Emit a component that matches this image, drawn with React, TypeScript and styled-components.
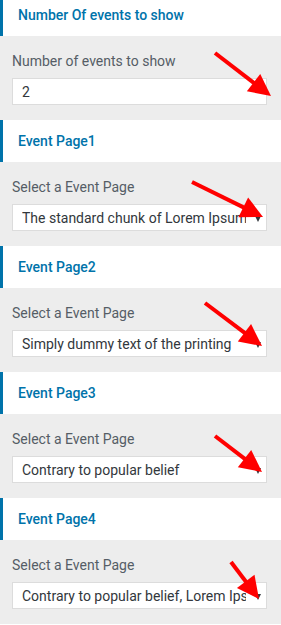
import React from 'react';
import styled, { createGlobalStyle } from 'styled-components';

const GlobalStyle = createGlobalStyle`
  html, body {
    margin: 0;
    padding: 0;
    background: #ffffff;
    overflow: hidden;
  }
  body {
    font-family: Roboto, "Liberation Sans", Arial, sans-serif;
  }
`;

const Page = styled.div`
  position: relative;
  width: 281px;
  /* the screenshot is scrolled a few pixels down */
  margin-top: -6px;
`;

const Header = styled.div`
  height: 42px;
  display: flex;
  align-items: center;
  box-sizing: border-box;
  padding-left: 15px;
  background: #fff;
  border-left: 3px solid #0073aa;
  color: #0073aa;
  font-size: 14px;
  font-weight: 500;
`;

const Panel = styled.div`
  background: #ededed;
  box-sizing: border-box;
  height: 84px;
  padding: 17px 14px 15px 12px;
  display: flex;
  flex-direction: column;
  gap: 9px;
`;

const Label = styled.div`
  font-size: 14px;
  line-height: 16px;
  color: #555d66;
`;

const Field = styled.div<{ $select?: boolean }>`
  position: relative;
  height: 27px;
  box-sizing: border-box;
  background: #fff;
  border: 1px solid #dcdcdc;
  display: flex;
  align-items: center;
  padding: 0 ${(p) => (p.$select ? '20px' : '8px')} 0 9px;
  font-size: 14px;
  color: #32373c;
`;

const FieldText = styled.span`
  white-space: nowrap;
  overflow: hidden;
  flex: 1;
`;

const Caret = styled.span`
  position: absolute;
  right: 5px;
  top: 11px;
  width: 0;
  height: 0;
  border-left: 3.5px solid transparent;
  border-right: 3.5px solid transparent;
  border-top: 6px solid #32373c;
`;

const Overlay = styled.svg`
  position: absolute;
  left: 0;
  top: 6px;
  pointer-events: none;
`;

type ArrowProps = { x1: number; y1: number; x2: number; y2: number };

const Arrow: React.FC<ArrowProps> = ({ x1, y1, x2, y2 }) => {
  const dx = x2 - x1;
  const dy = y2 - y1;
  const len = Math.sqrt(dx * dx + dy * dy);
  const ux = dx / len;
  const uy = dy / len;
  const headLen = 22;
  const half = 11;
  const bx = x2 - ux * headLen;
  const by = y2 - uy * headLen;
  const pts = `${x2},${y2} ${bx - uy * half},${by + ux * half} ${bx + uy * half},${by - ux * half}`;
  return (
    <g>
      <line x1={x1} y1={y1} x2={bx + ux * 2} y2={by + uy * 2} stroke="#ff0000" strokeWidth={4} />
      <polygon points={pts} fill="#ff0000" />
    </g>
  );
};

const sections = [
  { title: 'Event Page1', value: 'The standard chunk of Lorem Ipsum' },
  { title: 'Event Page2', value: 'Simply dummy text of the printing' },
  { title: 'Event Page3', value: 'Contrary to popular belief' },
  { title: 'Event Page4', value: 'Contrary to popular belief, Lorem Ipsum' },
];

const arrows: ArrowProps[] = [
  { x1: 215, y1: 53, x2: 271, y2: 96 },
  { x1: 192, y1: 182, x2: 263, y2: 217 },
  { x1: 205, y1: 303, x2: 262, y2: 346 },
  { x1: 215, y1: 436, x2: 262, y2: 472 },
  { x1: 231, y1: 562, x2: 259, y2: 599 },
];

const App: React.FC = () => {
  return (
    <>
      <GlobalStyle />
      <Page>
        <Header>Number Of events to show</Header>
        <Panel>
          <Label>Number of events to show</Label>
          <Field>
            <FieldText>2</FieldText>
          </Field>
        </Panel>
        {sections.map((s) => (
          <React.Fragment key={s.title}>
            <Header>{s.title}</Header>
            <Panel>
              <Label>Select a Event Page</Label>
              <Field $select>
                <FieldText>{s.value}</FieldText>
                <Caret />
              </Field>
            </Panel>
          </React.Fragment>
        ))}
        <Overlay width={281} height={625} viewBox="0 0 281 625">
          {arrows.map((a, i) => (
            <Arrow key={i} {...a} />
          ))}
        </Overlay>
      </Page>
    </>
  );
};

export default App;
